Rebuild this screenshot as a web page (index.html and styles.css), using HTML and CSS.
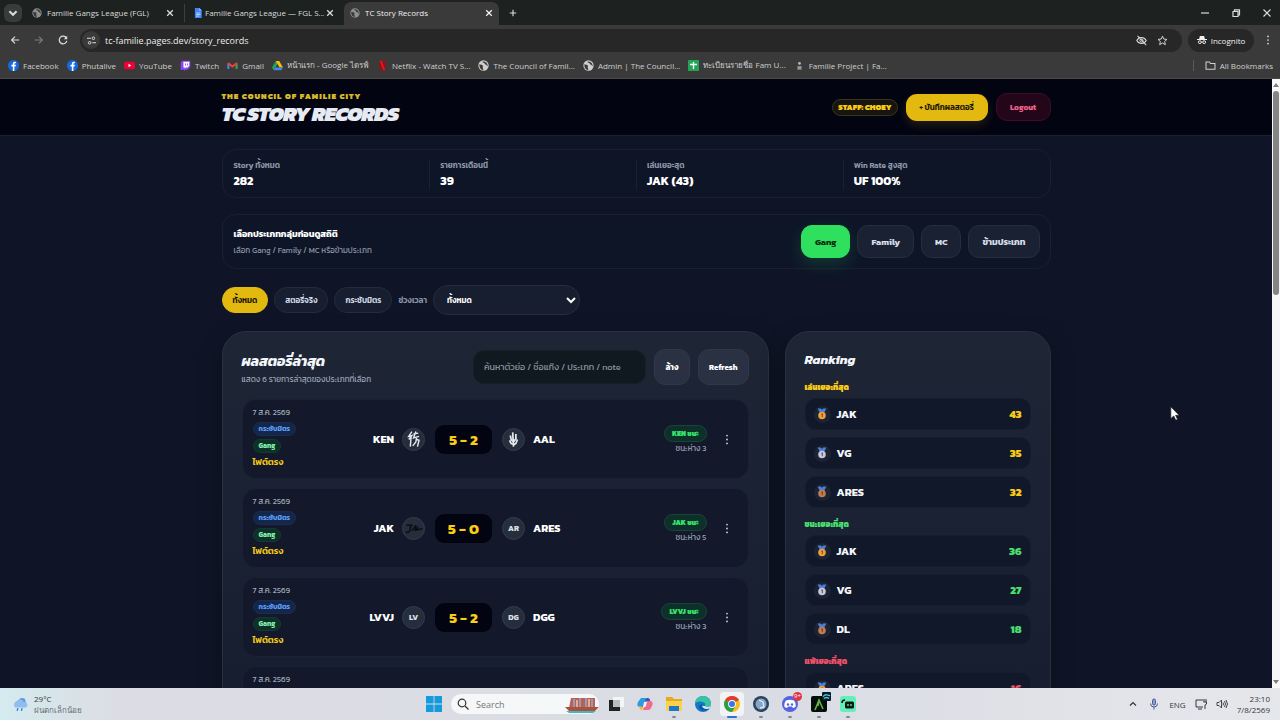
FILE: index.html
```html
<!DOCTYPE html>
<html lang="th">

<head>
    <meta charset="UTF-8">
    <meta name="viewport" content="width=device-width, initial-scale=1.0">
    <title>TC Story Records</title>
    <link rel="stylesheet" href="styles.css">
</head>

<body>

    <!-- shared icons -->
    <svg class="defs" aria-hidden="true">
        <symbol id="globe" viewBox="0 0 16 16">
            <circle cx="8" cy="8" r="7.5" fill="currentColor" />
            <path d="M2 6c2 1 4 0 5 2s-1 2 0 3.500 1 2 0 3C4 14 1.500 11 2 6zM7 2c-1 2 1 2 2 2s0 2 2 2.500 1 2 3 2.500c.5-4-2.500-7-7-7z" fill="#3a3a3a" />
        </symbol>
        <symbol id="close" viewBox="0 0 10 10">
            <path d="M1.500 1.500l7 7M8.500 1.500l-7 7" stroke="currentColor" stroke-width="1.600" fill="none" />
        </symbol>
        <symbol id="fb" viewBox="0 0 16 16">
            <circle cx="8" cy="8" r="8" fill="#1768e0" />
            <path d="M7 16V9.500H5V7h2V5.500C7 3.500 8 2.500 10 2.500h1.500v2.300h-1.200c-.8 0-1 .4-1 1V7h2.200l-.4 2.500H9.300V16z" fill="#fff" />
        </symbol>
        <symbol id="dots" viewBox="0 0 4 14">
            <circle cx="2" cy="2" r="1.200" fill="currentColor" />
            <circle cx="2" cy="7" r="1.200" fill="currentColor" />
            <circle cx="2" cy="12" r="1.200" fill="currentColor" />
        </symbol>
        <symbol id="medal" viewBox="0 0 16 18">
            <path d="M1 0h5l2 2 2-2h5l-3.500 7h-7z" fill="#4a80d8" />
            <circle cx="8" cy="11.500" r="6" fill="currentColor" />
            <path d="M7 9.500l1.500-1V14" stroke="#5a3b2a" stroke-width="1.400" fill="none" />
        </symbol>
    </svg>

    <div class="browser">
        <div class="tabs">
            <button class="tab-search" aria-label="Search tabs"><svg viewBox="0 0 10 10"><path d="M2 3.500l3 3 3-3" stroke="currentColor" stroke-width="1.600" fill="none" /></svg></button>
            <div class="tab">
                <svg class="favicon"><use href="#globe" /></svg>
                <span>Familie Gangs League (FGL)</span>
                <button aria-label="Close tab"><svg><use href="#close" /></svg></button>
            </div>
            <div class="tab divided">
                <svg class="favicon doc" viewBox="0 0 12 16"><path d="M1 0h7l4 4v12H1z" fill="#4285f4" /><path d="M8 0l4 4H8z" fill="#a9c8ff" /><path d="M3 8h7M3 10.500h7M3 13h5" stroke="#fff" /></svg>
                <span>Familie Gangs League — FGL S...</span>
                <button aria-label="Close tab"><svg><use href="#close" /></svg></button>
            </div>
            <div class="tab active">
                <svg class="favicon"><use href="#globe" /></svg>
                <span>TC Story Records</span>
                <button aria-label="Close tab"><svg><use href="#close" /></svg></button>
            </div>
            <button class="new-tab" aria-label="New tab"><svg viewBox="0 0 10 10"><path d="M5 1v8M1 5h8" stroke="currentColor" stroke-width="1.400" /></svg></button>
            <div class="window-buttons">
                <button aria-label="Minimize"><svg viewBox="0 0 10 10"><path d="M1 5h8" stroke="currentColor" stroke-width="1.200" /></svg></button>
                <button aria-label="Restore"><svg viewBox="0 0 10 10"><path d="M2 3.500h5v5H2zM3.500 3V1.800h5V7H7.500" stroke="currentColor" stroke-width="1.200" fill="none" /></svg></button>
                <button aria-label="Close"><svg viewBox="0 0 10 10"><path d="M1.500 1.500l7 7M8.500 1.500l-7 7" stroke="currentColor" stroke-width="1.100" /></svg></button>
            </div>
        </div>

        <div class="toolbar">
            <div class="nav-buttons">
                <button aria-label="Back"><svg viewBox="0 0 12 12"><path d="M11 6H2M6 2L2 6l4 4" stroke="currentColor" stroke-width="1.400" fill="none" /></svg></button>
                <button aria-label="Forward" disabled><svg viewBox="0 0 12 12"><path d="M1 6h9M6 2l4 4-4 4" stroke="currentColor" stroke-width="1.400" fill="none" /></svg></button>
                <button aria-label="Reload"><svg viewBox="0 0 12 12"><path d="M10 3.500A4.600 4.600 0 1 0 10.600 7" stroke="currentColor" stroke-width="1.500" fill="none" /><path d="M11 1v4H7z" fill="currentColor" /></svg></button>
            </div>
            <div class="omnibox">
                <span class="site-info"><svg viewBox="0 0 12 12"><path d="M0 3h5M7 9h5" stroke="currentColor" stroke-width="1.400" /><circle cx="8.500" cy="3" r="1.700" stroke="currentColor" stroke-width="1.300" fill="none" /><circle cx="3.500" cy="9" r="1.700" stroke="currentColor" stroke-width="1.300" fill="none" /></svg></span>
                <input type="text" value="tc-familie.pages.dev/story_records" aria-label="Address">
                <svg viewBox="0 0 14 14"><path d="M1 7c3-5 9-5 12 0-3 5-9 5-12 0zM2 1l11 12" stroke="currentColor" stroke-width="1.300" fill="none" /><circle cx="7" cy="7" r="2" stroke="currentColor" stroke-width="1.200" fill="none" /></svg>
                <svg viewBox="0 0 14 14"><path d="M7 1.500l1.700 3.700 4 .4-3 2.700.9 4L7 10.200l-3.600 2.100.9-4-3-2.700 4-.4z" stroke="currentColor" stroke-width="1.200" fill="none" /></svg>
            </div>
            <button class="incognito"><svg viewBox="0 0 14 14"><path d="M4 1.500h6l1 4H3zM0 5.500h14v1.500H0z" fill="currentColor" /><circle cx="4" cy="10" r="2" stroke="currentColor" stroke-width="1.400" fill="none" /><circle cx="10" cy="10" r="2" stroke="currentColor" stroke-width="1.400" fill="none" /><path d="M6 10h2" stroke="currentColor" /></svg>Incognito</button>
            <button class="more" aria-label="Menu"><svg><use href="#dots" /></svg></button>
        </div>

        <nav class="bookmarks">
            <a href="#"><svg><use href="#fb" /></svg>Facebook</a>
            <a href="#"><svg><use href="#fb" /></svg>Phutalive</a>
            <a href="#"><svg viewBox="0 0 16 16"><rect y="2.500" width="16" height="11" rx="3" fill="#f00033" /><path d="M6.500 5.500v5l4-2.500z" fill="#fff" /></svg>YouTube</a>
            <a href="#"><svg viewBox="0 0 16 16"><path d="M3 1h12v9l-4 4H8l-2 2v-2H1V4z" fill="#8d44f5" /><path d="M5 2.500h8.500v6L11 11H8.500L7 12.500V11H5z" fill="#fff" /><path d="M8 5v3M11 5v3" stroke="#8d44f5" stroke-width="1.300" /></svg>Twitch</a>
            <a href="#"><svg viewBox="0 0 16 16"><path d="M2 13V5" stroke="#4285f4" stroke-width="3" /><path d="M14 13V5" stroke="#34a853" stroke-width="3" /><path d="M1.500 4.500L8 9.500l6.500-5" stroke="#ea4335" stroke-width="3" fill="none" /></svg>Gmail</a>
            <a href="#"><svg viewBox="0 0 16 16"><path d="M5.500 1.500h5L5 11l-2.500 4L0 11z" fill="#1ea55b" /><path d="M5.500 1.500h5L16 11h-5z" fill="#fbbc04" /><path d="M5 11h11l-2.500 4h-11z" fill="#4285f4" /></svg>หน้าแรก - Google ไดรฟ์</a>
            <a href="#"><svg viewBox="0 0 16 16"><path d="M4 1h3v14H4zM9 1h3v14H9z" fill="#a80710" /><path d="M4 1h3l5 14H9z" fill="#f0101c" /></svg>Netflix - Watch TV S...</a>
            <a href="#"><svg><use href="#globe" /></svg>The Council of Famil...</a>
            <a href="#"><svg><use href="#globe" /></svg>Admin | The Council...</a>
            <a href="#"><svg viewBox="0 0 16 16"><rect width="16" height="16" rx="1" fill="#23a455" /><path d="M8 3v10M3 6.500h10" stroke="#fff" stroke-width="2" /></svg>ทะเบียนรายชื่อ Fam U...</a>
            <a href="#"><svg viewBox="0 0 16 16"><circle cx="8" cy="5" r="2" fill="#bbb" /><path d="M5 9h6v5H5z" fill="#999" /></svg>Familie Project | Fa...</a>
            <a href="#" class="all"><svg viewBox="0 0 16 16"><path d="M1.500 3h5l1.500 2h6.500v8.500h-13z" stroke="currentColor" stroke-width="1.500" fill="none" /></svg>All Bookmarks</a>
        </nav>
    </div>

    <div class="viewport">
        <div class="page">
            <header>
                <div class="container header-inner">
                    <div>
                        <p class="eyebrow">THE COUNCIL OF FAMILIE CITY</p>
                        <h1>TC STORY RECORDS</h1>
                    </div>
                    <div class="header-actions">
                        <span class="staff">STAFF: CHOEY</span>
                        <button class="primary">+ บันทึกผลสตอรี่</button>
                        <button class="logout">Logout</button>
                    </div>
                </div>
            </header>

            <main class="container">
                <section class="stats">
                    <div><span>Story ทั้งหมด</span><b>282</b></div>
                    <div><span>รายการเดือนนี้</span><b>39</b></div>
                    <div><span>เล่นเยอะสุด</span><b>JAK (43)</b></div>
                    <div><span>Win Rate สูงสุด</span><b>UF 100%</b></div>
                </section>

                <section class="group-picker">
                    <div>
                        <h2>เลือกประเภทกลุ่มก่อนดูสถิติ</h2>
                        <p>เลือก Gang / Family / MC หรือข้ามประเภท</p>
                    </div>
                    <div class="group-buttons">
                        <button class="selected">Gang</button>
                        <button>Family</button>
                        <button>MC</button>
                        <button>ข้ามประเภท</button>
                    </div>
                </section>

                <section class="filters">
                    <button class="selected">ทั้งหมด</button>
                    <button>สตอรี่จริง</button>
                    <button>กระชับมิตร</button>
                    <label for="period">ช่วงเวลา</label>
                    <select id="period">
                        <option>ทั้งหมด</option>
                    </select>
                </section>

                <div class="columns">
                    <section class="panel">
                        <div class="panel-head">
                            <div>
                                <h2>ผลสตอรี่ล่าสุด</h2>
                                <p>แสดง 6 รายการล่าสุดของประเภทที่เลือก</p>
                            </div>
                            <div class="search-row">
                                <input type="text" placeholder="ค้นหาตัวย่อ / ชื่อแก๊ง / ประเภท / note" aria-label="ค้นหา">
                                <button>ล้าง</button>
                                <button>Refresh</button>
                            </div>
                        </div>

                        <article class="match">
                            <div class="meta">
                                <time>7 ส.ค. 2569</time>
                                <span class="tag blue">กระชับมิตร</span>
                                <span class="tag green">Gang</span>
                                <strong>ไฟต์ตรง</strong>
                            </div>
                            <div class="versus">
                                <b class="home">KEN</b>
                                <span class="logo"><svg viewBox="0 0 24 24"><path d="M10 2L6 8l4-1-4 5M9 8l-1 13M12 5l6-1M15 2l-3 8 7-2M16 9l-1 6-4 5M16 12l3 1-2 8" stroke="#e6e9ee" stroke-width="1.800" fill="none" /></svg></span>
                                <span class="score">5 - 2</span>
                                <span class="logo"><svg viewBox="0 0 24 24"><path d="M11 3l1 18M8 7l1 5 3 3M15 5v6l-3 4M7 13l2 4 3 1M17 12l-2 5-3 2" stroke="#e6e9ee" stroke-width="2.200" fill="none" /></svg></span>
                                <b>AAL</b>
                            </div>
                            <div class="result"><span class="winner">KEN ชนะ</span><small>ชนะห่าง 3</small></div>
                            <button class="menu" aria-label="เมนู"><svg><use href="#dots" /></svg></button>
                        </article>

                        <article class="match">
                            <div class="meta">
                                <time>7 ส.ค. 2569</time>
                                <span class="tag blue">กระชับมิตร</span>
                                <span class="tag green">Gang</span>
                                <strong>ไฟต์ตรง</strong>
                            </div>
                            <div class="versus">
                                <b class="home">JAK</b>
                                <span class="logo"><svg viewBox="0 0 24 24"><path d="M3 8h8M9 7L7 16l-5 1M10 15l5-7-1 7 3-4v3l6-2" stroke="#0b0d12" stroke-width="1.800" fill="none" /></svg></span>
                                <span class="score">5 - 0</span>
                                <span class="logo">AR</span>
                                <b>ARES</b>
                            </div>
                            <div class="result"><span class="winner">JAK ชนะ</span><small>ชนะห่าง 5</small></div>
                            <button class="menu" aria-label="เมนู"><svg><use href="#dots" /></svg></button>
                        </article>

                        <article class="match">
                            <div class="meta">
                                <time>7 ส.ค. 2569</time>
                                <span class="tag blue">กระชับมิตร</span>
                                <span class="tag green">Gang</span>
                                <strong>ไฟต์ตรง</strong>
                            </div>
                            <div class="versus">
                                <b class="home">LVVJ</b>
                                <span class="logo">LV</span>
                                <span class="score">5 - 2</span>
                                <span class="logo">DG</span>
                                <b>DGG</b>
                            </div>
                            <div class="result"><span class="winner">LVVJ ชนะ</span><small>ชนะห่าง 3</small></div>
                            <button class="menu" aria-label="เมนู"><svg><use href="#dots" /></svg></button>
                        </article>

                        <article class="match">
                            <div class="meta">
                                <time>7 ส.ค. 2569</time>
                            </div>
                        </article>
                    </section>

                    <aside class="panel ranking">
                        <h2>Ranking</h2>
                        <div class="rank-group played">
                            <h3>เล่นเยอะที่สุด</h3>
                            <ol>
                                <li><i class="medal gold"><svg><use href="#medal" /></svg></i>JAK<b>43</b></li>
                                <li><i class="medal silver"><svg><use href="#medal" /></svg></i>VG<b>35</b></li>
                                <li><i class="medal bronze"><svg><use href="#medal" /></svg></i>ARES<b>32</b></li>
                            </ol>
                        </div>
                        <div class="rank-group won">
                            <h3>ชนะเยอะที่สุด</h3>
                            <ol>
                                <li><i class="medal gold"><svg><use href="#medal" /></svg></i>JAK<b>36</b></li>
                                <li><i class="medal silver"><svg><use href="#medal" /></svg></i>VG<b>27</b></li>
                                <li><i class="medal bronze"><svg><use href="#medal" /></svg></i>DL<b>18</b></li>
                            </ol>
                        </div>
                        <div class="rank-group lost">
                            <h3>แพ้เยอะที่สุด</h3>
                            <ol>
                                <li><i class="medal gold"><svg><use href="#medal" /></svg></i>ARES<b>16</b></li>
                            </ol>
                        </div>
                    </aside>
                </div>
            </main>
        </div>
        <div class="scrollbar"><span class="arrow up"></span><span class="thumb"></span><span class="arrow down"></span></div>
        <svg class="cursor" viewBox="0 0 12 18"><path d="M1 1v14l3.500-3 2.500 5 2-1-2.300-4.800H11z" fill="#fff" stroke="#222" stroke-width=".8" /></svg>
    </div>

    <footer class="taskbar">
        <div class="weather">
            <svg viewBox="0 0 20 18"><circle cx="12" cy="6" r="4" fill="#5d9be8" /><path d="M4 13a4 4 0 0 1 1-7 5 5 0 0 1 9 1 3 3 0 0 1 2 6z" fill="#8fbdf0" /><path d="M7 14l-1 3M12 14l-1 3" stroke="#2472d8" stroke-width="1.500" /></svg>
            <p><span>29°C</span><span class="dim">ฝนตกเล็กน้อย</span></p>
        </div>
        <div class="apps">
            <button aria-label="Start"><svg viewBox="0 0 16 16"><path d="M0 0h7.600v7.600H0zM8.400 0H16v7.600H8.400zM0 8.400h7.600V16H0zM8.400 8.400H16V16H8.400z" fill="#159bdc" /></svg></button>
            <label class="task-search">
                <svg viewBox="0 0 12 12"><circle cx="5" cy="5" r="3.800" stroke="#333" stroke-width="1.200" fill="none" /><path d="M8 8l3.500 3.500" stroke="#333" stroke-width="1.300" /></svg>
                <input type="text" placeholder="Search" aria-label="Search">
                <svg class="ship" viewBox="0 0 34 17"><path d="M6 2h24v10H4z" fill="#c65b54" /><path d="M9 3v9M15 2v9M21 2v10M27 3v9" stroke="#7fa6b8" stroke-width="2" /><path d="M12 4v8M24 3v8" stroke="#f0c9a0" stroke-width="1.500" /><path d="M0 11h34l-4 4H4z" fill="#a8523f" /><path d="M1 15h32l-3 2H4z" fill="#43b6c4" /></svg>
            </label>
            <button aria-label="Task view"><svg viewBox="0 0 16 16"><path d="M5 1h11v10H5z" fill="#f4f5f7" /><path d="M1 4h11v11H1z" fill="#222" /><path d="M5 4h7v7H5z" fill="#b9bcc1" /></svg></button>
            <button aria-label="Copilot"><svg viewBox="0 0 16 16"><path d="M4 2h6l-3 9H3c-3 0-3-3-2-5z" fill="#2c9be0" /><path d="M10 2c3 0 3 2 3.500 4L10 7 8 4z" fill="#3356c8" /><path d="M6 14l3-9h4c3 0 3 3 2 5l-1 2c-1 2-2 2-4 2z" fill="#ef6b8a" /><path d="M2 10l4 1-1 3c-2 0-3-2-3-4z" fill="#f5b52c" /><path d="M7 6h3L8.500 11H6z" fill="#eef" /></svg></button>
            <button class="open" aria-label="Explorer"><svg viewBox="0 0 16 16"><path d="M0 1h6l2 2h8v12H0z" fill="#e8a91c" /><path d="M0 5h16v10H0z" fill="#fbd04b" /><path d="M3 10h10v5H3z" fill="#1e78c8" /></svg></button>
            <button aria-label="Edge"><svg viewBox="0 0 16 16"><circle cx="8" cy="8" r="8" fill="#1476c6" /><path d="M0 8a8 8 0 0 1 16 0c0 3-4 4-6 2 1-3-1-4-3-4C4 5 1 6 0 8z" fill="#37c3a6" /><path d="M7 8c-1 4 3 6 7 4.500C11 16 4 15 4 10z" fill="#0c5aa4" /><path d="M10 10c2 2 5 1 6-1l-1 3c-3 2-7 1-8-2z" fill="#dfe3ea" /></svg></button>
            <button class="open current" aria-label="Chrome"><svg viewBox="0 0 16 16"><circle cx="8" cy="8" r="8" fill="#f6bd1b" /><path d="M8 8L1.100 4A8 8 0 0 1 15 4z" fill="#df3b30" /><path d="M8 8L1.100 4A8 8 0 0 0 8 16l3.500-6z" fill="#2b9d4b" /><circle cx="8" cy="8" r="3.900" fill="#fff" /><circle cx="8" cy="8" r="3" fill="#3577e5" /></svg></button>
            <button class="open" aria-label="App"><svg viewBox="0 0 16 16"><circle cx="8" cy="8" r="8" fill="#28445f" /><circle cx="8" cy="8" r="5.500" fill="#88a5c4" /><path d="M6 4l4 2 1 5-4 1" stroke="#dce7f3" stroke-width="1.300" fill="none" /></svg></button>
            <button class="open" aria-label="Discord"><svg viewBox="0 0 16 16"><circle cx="8" cy="8" r="8" fill="#5662e0" /><path d="M4 4.500c3-1 5-1 8 0 1.500 2 2 4 1.500 6.500l-2.500 1-1-1.500H6L5 12l-2.500-1C2 8.500 2.500 6.500 4 4.500z" fill="#fff" /><circle cx="6" cy="8.500" r="1.200" fill="#5662e0" /><circle cx="10" cy="8.500" r="1.200" fill="#5662e0" /></svg><span class="count">9+</span></button>
            <button class="open" aria-label="Game"><svg viewBox="0 0 16 16"><rect width="16" height="16" rx="2" fill="#080c0b" /><path d="M4 14l4-10 4 9M8 4l-1 6" stroke="#5fb63a" stroke-width="1.600" fill="none" /></svg><span class="count game"><svg viewBox="0 0 10 8"><path d="M1 4l3-2 5 1M2 6l3-1 3 1" stroke="#57c8e8" stroke-width="1.500" fill="none" /></svg></span></button>
            <button class="open" aria-label="Recorder"><svg viewBox="0 0 16 16"><rect width="16" height="16" rx="3" fill="#62f0b8" /><rect x="5" y="5.500" width="9" height="7" rx="1.500" fill="#0b1512" /><path d="M2 7c0-2 1-3 3-3" stroke="#0b1512" stroke-width="1.500" fill="none" /><path d="M8 8v2M11 8v2" stroke="#62f0b8" stroke-width="1.300" /></svg></button>
        </div>
        <div class="tray">
            <svg viewBox="0 0 12 12"><path d="M3 7.500l3-3 3 3" stroke="currentColor" stroke-width="1.200" fill="none" /></svg>
            <svg viewBox="0 0 12 12"><rect x="4.500" y="1" width="3" height="6" rx="1.500" fill="#8aa0d0" stroke="#4a5a90" /><path d="M2.500 5.500a3.500 3.500 0 0 0 7 0M6 9v2.500" stroke="#4a5a90" fill="none" /></svg>
            <span>ENG</span>
            <svg viewBox="0 0 12 12"><path d="M8 2H1v7h7M3 11h4M9 1v3M11 1v3M8.500 4h3v2L10 7v4" stroke="currentColor" fill="none" /></svg>
            <svg viewBox="0 0 12 12"><path d="M1 4.500h2L5.500 2v8L3 7.500H1zM7 4.500q1 1.500 0 3M8.500 3q2 3 0 6M10 2q3 4 0 8" stroke="currentColor" stroke-width=".9" fill="none" /></svg>
            <p class="clock"><span>23:10</span><span>7/8/2569</span></p>
        </div>
    </footer>

</body>

</html>
```

FILE: styles.css
```css
* {
    box-sizing: border-box;
}

body {
    margin: 0;
    height: 100vh;
    display: flex;
    flex-direction: column;
    overflow: hidden;
    background-color: #0f1526;
    color: #e8edf5;
    font-family: Kanit, "Noto Sans", "Open Sans", sans-serif;
    font-size: 8px;
}

h1, h2, h3, p, ol {
    margin: 0;
    padding: 0;
}

button, input, select {
    font: inherit;
    color: inherit;
    border: 0;
    background: none;
    padding: 0;
    margin: 0;
}

button {
    display: inline-flex;
    align-items: center;
    justify-content: center;
    white-space: nowrap;
}

a {
    color: inherit;
    text-decoration: none;
}

svg {
    display: block;
    width: 12px;
    height: 12px;
    flex: none;
}

.defs {
    position: absolute;
    width: 0;
    height: 0;
}

/* browser window */
.browser {
    background-color: #3a3a3a;
    color: #dcdcdc;
    font-family: "Open Sans", "Noto Sans", sans-serif;
    font-size: 9px;
    flex: none;
}

.tabs {
    display: flex;
    align-items: center;
    height: 25px;
    padding-left: 4px;
    background-color: #1d211f;
    font-size: 8px;
}

.tab-search {
    width: 18px;
    height: 18px;
    border-radius: 6px;
    background-color: #3a3c3b;
    margin-right: 2px;
}

.tab {
    display: flex;
    align-items: center;
    gap: 5px;
    width: 160px;
    height: 18px;
    padding: 0 10px 0 8px;
}

.tab span {
    flex: 1;
    overflow: hidden;
    white-space: nowrap;
}

.tab svg,
.new-tab svg {
    width: 8px;
    height: 8px;
}

.tab .favicon {
    width: 10px;
    height: 10px;
    color: #8b8f8d;
}

.divided {
    gap: 2px;
    border-left: 1px solid #3c403e;
}

.tab.active {
    width: 155px;
    height: 23px;
    padding: 0 6px 2px 6px;
    align-self: flex-end;
    background-color: #3a3a3a;
    border-radius: 7px 7px 0 0;
    color: #f0f0f0;
}

.new-tab {
    width: 28px;
    height: 18px;
}

.window-buttons {
    display: flex;
    gap: 21px;
    margin-left: auto;
    padding-right: 8px;
}

.window-buttons svg {
    width: 10px;
    height: 10px;
}

.toolbar {
    display: flex;
    align-items: center;
    height: 28px;
    padding: 2px 10px 0 10px;
    gap: 6px;
}

.nav-buttons {
    display: flex;
    gap: 14px;
    margin-right: 6px;
}

.nav-buttons svg {
    width: 10px;
    height: 10px;
}

.nav-buttons button:disabled {
    color: #7c7c7c;
}

.omnibox {
    flex: 1;
    display: flex;
    align-items: center;
    gap: 10px;
    height: 23px;
    padding: 0 14px 0 2px;
    border-radius: 12px;
    background-color: #272727;
}

.omnibox svg {
    width: 11px;
    height: 11px;
}

.omnibox .site-info {
    display: flex;
    align-items: center;
    justify-content: center;
    width: 18px;
    height: 18px;
    border-radius: 50%;
    background-color: #3a3a3a;
}

.omnibox .site-info svg {
    width: 9px;
    height: 9px;
}

.omnibox input {
    flex: 1;
    margin-left: -5px;
    color: #ededed;
}

.incognito {
    gap: 4px;
    height: 23px;
    width: 66px;
    border-radius: 12px;
    background-color: #272727;
    color: #f0f0f0;
    font-size: 8px;
}

.incognito svg {
    width: 10px;
    height: 10px;
}

.more {
    margin-left: 6px;
}

.more svg {
    width: 4px;
    height: 10px;
}

.bookmarks {
    display: flex;
    align-items: center;
    gap: 8px;
    height: 26px;
    padding: 0 7px 0 8px;
    color: #cfcfcf;
    border-bottom: 1px solid #4a4a4a;
    font-size: 8px;
    white-space: nowrap;
}

.bookmarks a {
    display: flex;
    align-items: center;
    gap: 4px;
}

.bookmarks svg {
    width: 11px;
    height: 11px;
}

.bookmarks .all {
    margin-left: auto;
    padding-left: 11px;
    border-left: 1px solid #5a5a5a;
}

/* page */
.viewport {
    position: relative;
    flex: 1;
    min-height: 0;
    display: flex;
}

.page {
    flex: 1;
    overflow: hidden;
}

.container {
    width: calc(100% - 32px);
    max-width: 829px;
    margin: 0 auto;
}

header {
    background-color: #020412;
    border-bottom: 1px solid #1a2030;
}

.header-inner {
    display: flex;
    align-items: center;
    justify-content: space-between;
    height: 56px;
}

.eyebrow {
    margin-bottom: 1px;
    color: #d9b82a;
    font-weight: 900;
    line-height: 12px;
    letter-spacing: 1px;
}

h1 {
    font-size: 21px;
    line-height: 22px;
    font-weight: 900;
    font-style: italic;
    letter-spacing: -1px;
    color: #e6eaf2;
}

.header-actions {
    display: flex;
    align-items: center;
    gap: 8px;
}

.staff {
    padding: 0 5px;
    border: 1px solid #3a351c;
    border-radius: 9px;
    background-color: #17150f;
    color: #facc15;
    line-height: 15px;
    font-weight: 900;
}

.primary {
    width: 82px;
    height: 27px;
    border-radius: 11px;
    background-color: #e3b90f;
    box-shadow: 0 4px 10px rgba(234, 190, 20, 0.15);
    color: #1a1503;
    font-weight: 600;
}

.logout {
    width: 55px;
    height: 28px;
    border: 1px solid #3d0e24;
    border-radius: 11px;
    background-color: #23061a;
    color: #f0638a;
    font-weight: 700;
}

main {
    display: flex;
    flex-direction: column;
    gap: 16px;
    padding-top: 13px;
}

.stats,
.group-picker {
    border: 1px solid #182031;
    border-radius: 14px;
    background-color: #0e1527;
}

.stats {
    display: grid;
    grid-template-columns: repeat(4, 1fr);
    padding: 9px 0 7px;
}

.stats div {
    display: flex;
    flex-direction: column;
    padding-left: 10px;
    border-left: 1px solid #182031;
}

.stats div:first-child {
    padding-left: 11px;
    border-left: 0;
}

.stats span {
    color: #8d97a9;
    line-height: 13px;
    font-weight: 600;
}

.stats b {
    color: #fff;
    font-size: 12px;
    line-height: 18px;
}

.group-picker {
    display: flex;
    align-items: center;
    justify-content: space-between;
    padding: 10px 10px 10px 11px;
}

.group-picker h2 {
    font-size: 9px;
    line-height: 17px;
    font-weight: 700;
    color: #fff;
}

.group-picker p {
    color: #8d97a9;
    line-height: 14px;
}

.group-buttons {
    display: flex;
    gap: 7px;
}

.group-buttons button {
    height: 33px;
    padding: 0 13px;
    border: 1px solid #252d3f;
    border-radius: 11px;
    background-color: #1a2133;
    color: #d6dce8;
    font-size: 9px;
    font-weight: 700;
}

.group-buttons .selected {
    background-color: #2fe05f;
    border-color: #2fe05f;
    box-shadow: 0 6px 16px rgba(34, 197, 94, 0.2);
    color: #052e12;
}

.filters {
    display: flex;
    align-items: center;
    gap: 6px;
    font-weight: 600;
}

.filters button {
    height: 26px;
    padding: 0 10px;
    border: 1px solid #232b3d;
    border-radius: 13px;
    background-color: #171e30;
    color: #d0d7e4;
}

.filters .selected {
    background-color: #e3b90f;
    border-color: #e3b90f;
    color: #1a1503;
}

.filters label {
    color: #8d97a9;
}

.filters select {
    width: 147px;
    height: 30px;
    padding: 0 0 0 9px;
    border: 1px solid #252d3e;
    border-radius: 15px;
    background-color: #171e30;
    color: #fff;
}

.columns {
    display: grid;
    grid-template-columns: 1fr 266px;
    gap: 16px;
    align-items: start;
}

.panel {
    padding: 17px 19px;
    border: 1px solid #28313f;
    border-radius: 24px;
    background: linear-gradient(#1e2636, #151d2f 400px);
    box-shadow: 0 8px 24px rgba(0, 0, 0, 0.3);
}

.panel h2 {
    font-size: 14px;
    line-height: 22px;
    font-weight: 700;
    font-style: italic;
    color: #f3f6fb;
}

.panel.ranking h2 {
    font-size: 13px;
}

.panel-head {
    display: flex;
    align-items: flex-end;
    justify-content: space-between;
    margin-bottom: 14px;
}

.panel-head p {
    color: #9aa4b5;
    line-height: 12px;
}

.search-row {
    display: flex;
    align-items: center;
    gap: 8px;
}

.search-row input {
    width: 173px;
    height: 34px;
    padding: 0 10px;
    border: 1px solid #151f27;
    border-radius: 11px;
    background-color: #10191f;
    font-size: 9px;
}

.search-row input::placeholder {
    color: #8e97a3;
}

.search-row button {
    height: 36px;
    min-width: 36px;
    padding: 0 10px;
    border: 1px solid #303848;
    border-radius: 11px;
    background-color: #293142;
    color: #fff;
    font-weight: 700;
}

.match {
    display: grid;
    grid-template-columns: 94px 1fr 126px 22px;
    gap: 9px;
    align-items: center;
    min-height: 80px;
    margin-bottom: 9px;
    padding: 5px 10px;
    border: 1px solid #192234;
    border-radius: 14px;
    background-color: #13192b;
}

.meta {
    display: flex;
    flex-direction: column;
    align-items: flex-start;
    align-self: start;
    gap: 3px;
}

.meta time {
    color: #a4adbc;
    line-height: 14px;
}

.meta strong {
    color: #f3c917;
    font-size: 9px;
    line-height: 13px;
    font-weight: 600;
}

.tag {
    padding: 0 5px;
    border: 1px solid;
    border-radius: 7px;
    font-size: 7px;
    line-height: 12px;
    font-weight: 700;
}

.tag.blue {
    border-color: #1a2c4e;
    background-color: #14264a;
    color: #5b9bf5;
}

.tag.green {
    border-color: #123a33;
    background-color: #0d3029;
    color: #86efac;
}

.versus {
    display: grid;
    grid-template-columns: 1fr 23px 57px 23px 1fr;
    align-items: center;
    column-gap: 10px;
    font-size: 11px;
}

.versus b {
    margin-left: -2px;
    color: #fff;
    font-weight: 700;
}

.versus .home {
    margin: 0 -2px 0 0;
    text-align: right;
}

.logo {
    display: flex;
    align-items: center;
    justify-content: center;
    height: 23px;
    border: 1px solid #343c4b;
    border-radius: 50%;
    background-color: #262e3d;
    color: #d8dee8;
    font-size: 8px;
    font-weight: 700;
}

.logo svg {
    width: 19px;
    height: 19px;
}

.score {
    border-radius: 9px;
    background-color: #020412;
    color: #facc15;
    font-size: 15px;
    line-height: 29px;
    font-weight: 700;
    text-align: center;
}

.result {
    display: flex;
    flex-direction: column;
    align-items: flex-end;
}

.winner {
    padding: 0 7px;
    border: 1px solid #17453a;
    border-radius: 9px;
    background-color: #0d3029;
    color: #37e06f;
    font-size: 7px;
    line-height: 15px;
    font-weight: 900;
}

.result small {
    color: #9aa4b5;
    font-size: 8px;
    line-height: 12px;
}

.menu svg {
    width: 4px;
    height: 11px;
    color: #c3cad6;
}

.rank-group h3 {
    margin: 10px 0 5px;
    font-size: 8px;
    line-height: 12px;
    font-weight: 900;
}

.rank-group ol {
    display: grid;
    gap: 7px;
    list-style: none;
}

.rank-group li {
    display: flex;
    align-items: center;
    gap: 6px;
    height: 32px;
    padding: 0 8px;
    border: 1px solid #151d2e;
    border-radius: 11px;
    background-color: #111829;
    color: #f3f6fb;
    font-size: 11px;
    font-weight: 700;
}

.rank-group li b {
    margin-left: auto;
    font-weight: 800;
}

.played h3,
.played b {
    color: #facc15;
}

.won h3,
.won b {
    color: #4ade6f;
}

.lost h3,
.lost b {
    color: #ef4f67;
}

.medal {
    display: flex;
    align-items: center;
    justify-content: center;
    width: 17px;
    height: 17px;
    border-radius: 50%;
    background-color: #1c2434;
}

.medal svg {
    width: 10px;
    height: 12px;
}

.gold {
    color: #f0a03c;
}

.silver {
    color: #c9c8e2;
}

.bronze {
    color: #c57b4f;
}

.scrollbar {
    display: flex;
    flex-direction: column;
    align-items: center;
    width: 8px;
    padding: 4px 0;
    background-color: #f7f7f7;
}

.arrow {
    border: 3px solid transparent;
}

.up {
    border-top: 0;
    border-bottom: 4px solid #7c7c7c;
}

.down {
    margin-top: auto;
    border-bottom: 0;
    border-top: 4px solid #7c7c7c;
}

.thumb {
    width: 6px;
    height: 34%;
    margin-top: 4px;
    border-radius: 3px;
    background-color: #858585;
}

.cursor {
    position: absolute;
    left: 1170px;
    top: 327px;
    width: 10px;
    height: 15px;
}

/* taskbar */
.taskbar {
    display: grid;
    grid-template-columns: 1fr auto 1fr;
    align-items: center;
    height: 32px;
    flex: none;
    padding: 0 10px 0 12px;
    background: linear-gradient(90deg, #d3ebef, #dcdde4 9%, #dadce4 60%, #e6e7eb);
    color: #33363c;
    font-family: "Open Sans", "Noto Sans", sans-serif;
}

.taskbar p {
    display: flex;
    flex-direction: column;
    line-height: 11px;
}

.weather {
    display: flex;
    align-items: center;
    gap: 5px;
}

.weather svg {
    width: 17px;
    height: 16px;
}

.dim {
    color: #6a6e76;
}

.apps {
    display: flex;
    align-items: center;
    gap: 5px;
}

.apps button {
    position: relative;
    width: 24px;
    height: 24px;
    border-radius: 4px;
}

.apps button > svg {
    width: 16px;
    height: 16px;
}

.open::after {
    content: "";
    position: absolute;
    bottom: -2px;
    left: 10px;
    width: 4px;
    height: 2px;
    border-radius: 1px;
    background-color: #85888f;
}

.apps .current {
    background-color: #f2f3f6;
}

.current::after {
    left: 7px;
    width: 10px;
    background-color: #2f6fd0;
}

.count {
    position: absolute;
    top: 0;
    right: 0;
    width: 9px;
    height: 9px;
    border-radius: 5px;
    background-color: #dc3545;
    color: #fff;
    font-size: 6px;
    line-height: 9px;
    text-align: center;
}

.game {
    border-radius: 1px;
    background-color: #0a1c26;
}

.apps .game svg {
    width: 9px;
    height: 9px;
}

.task-search {
    display: flex;
    align-items: center;
    gap: 7px;
    width: 148px;
    height: 20px;
    padding-left: 6px;
    border-radius: 10px;
    background-color: #f6f7f9;
    overflow: hidden;
}

.task-search input {
    flex: 1;
    min-width: 0;
    font-size: 9px;
}

.task-search .ship {
    width: 34px;
    height: 17px;
}

.tray {
    display: flex;
    align-items: center;
    justify-content: flex-end;
    gap: 9px;
    white-space: nowrap;
}

.clock {
    text-align: right;
}
```
